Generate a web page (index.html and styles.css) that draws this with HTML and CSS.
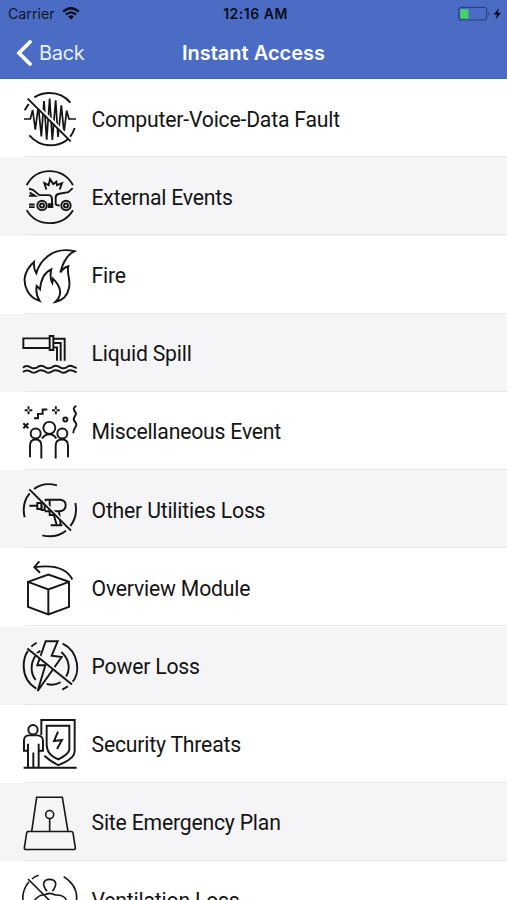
FILE: index.html
```html
<!DOCTYPE html>
<html lang="en">
<head>
<meta charset="utf-8">
<title>Instant Access</title>
<link rel="stylesheet" href="styles.css">
</head>
<body>
<header class="header">
  <div class="status">
    <div class="carrier"><span>Carrier</span>
      <svg class="wifi" viewBox="0 0 18 13"><path d="M1.2 4.7Q9-2.3 16.8 4.7M4 7.6Q9 3.2 14 7.6"/><path class="solid" d="M6.1 9.5Q9 7.2 11.9 9.5L9 12.5Z"/></svg>
    </div>
    <time class="clock">12:16 AM</time>
    <div class="power">
      <svg class="battery" viewBox="0 0 44 16"><rect class="case" x=".7" y="1.4" width="28" height="12.6" rx="2.5"/><rect class="charge" x="2.3" y="3.2" width="8.2" height="9.2" rx=".8"/><path class="cap" d="M30.3 5.7q2.5 2 0 4z"/><path class="bolt" d="M41 2L35.7 8.5H39L37.6 13.6L43 6.8H39.7Z"/></svg>
    </div>
  </div>
  <nav class="nav">
    <a class="back"><svg class="chevron" viewBox="0 0 16 26"><path d="M14 2L3 13L14 24"/></svg><span>Back</span></a>
    <h1 class="title">Instant Access</h1>
  </nav>
</header>
<main class="list">
  <div class="row">
    <svg class="icon" viewBox="0 0 240 216"><path d="M44 79L56 60M73 40Q94 27 119 27Q157 27 181 56M194 132Q177 184 119 184Q84 183 58 154"/><path class="wave" d="M42 105H61L68 78L76 137L85 66L94 157L102 51L110 167L119 44L127 168L137 49L144 159L154 64L162 146L170 80L177 105H198"/><path class="halo" d="M56 41L185 169"/><path d="M53 44L182 172"/></svg>
    <span class="label">Computer-Voice-Data Fault</span>
  </div>
  <div class="row">
    <svg class="icon" viewBox="0 .6 240 216"><path d="M50 70Q73 28 119 28Q165 28 189 70M50 145Q73 184 119 184Q165 184 189 145"/><path d="M57 81L69 84L88 100H118Q126 102 126 113V132H115M59 92L75 102H57M57 128H74M57 136H74M188 79L175 91L148 96Q137 98 137 107V126Q137 131 149 131M116 127H127V136H116Z"/><path d="M109 83L103 64L116 70L120 52L130 67L139 60L141 70L156 64L149 83"/><circle cx="96" cy="131" r="14"/><circle cx="96" cy="131" r="6"/><circle cx="168" cy="131" r="14"/><circle cx="168" cy="131" r="6"/></svg>
    <span class="label">External Events</span>
  </div>
  <div class="row">
    <svg class="icon" viewBox="0 1.2 240 216"><path d="M89 184C55 173 42 142 44 116Q47 89 72 67Q70 87 79 101C87 70 124 18 193 35Q164 48 151 99Q159 85 175 80C169 105 183 116 177 145Q170 180 136 187C157 167 155 143 129 117L127 130Q118 113 124 89Q94 102 90 149L80 139Q76 164 89 184Z"/></svg>
    <span class="label">Fire</span>
  </div>
  <div class="row">
    <svg class="icon" viewBox="0 1.8 240 216"><path d="M119 60H40V89H119M119 53H130V95H119ZM131 61H164V127M131 74H152V127M131 87H141V127"/><path d="M39 148Q47 140 56 144L66 149Q76 152 86 144Q92 140 101 144L110 149Q120 152 130 144Q136 140 145 144L155 149Q165 152 174 144Q181 140 188 144L200 149M39 161Q47 154 56 157L66 162Q76 165 86 157Q92 154 101 157L110 162Q120 165 130 157Q136 154 145 157L155 162Q165 165 174 157Q181 154 188 157L200 162"/></svg>
    <span class="label">Liquid Spill</span>
  </div>
  <div class="row">
    <svg class="icon" viewBox="0 2.4 240 216"><path d="M44 42H53M58 42H67M55.500 30V39M55.500 45V54M126 42H135M140 42H149M137.500 30V39M137.500 45V54M72 66H84V53H98V40H112M40 81L55 96M55 81L40 96M199 29C182 38 198 46 198 53C197 61 185 65 194 76C208 90 189 91 190 111"/><circle cx="166" cy="70" r="6"/><circle cx="118" cy="95" r="18"/><circle cx="77" cy="112" r="15"/><circle cx="157" cy="112" r="15"/><path d="M60 183V148Q60 130 77 130Q94 130 94 148V187M96 127Q104 114 118 114Q132 114 139 127M137 187V148Q137 130 156 130Q174 130 174 148V183"/></svg>
    <span class="label">Miscellaneous Event</span>
  </div>
  <div class="row">
    <svg class="icon" viewBox="0 3 240 216"><path d="M44 130Q34 88 59 58M72 45Q101 23 141 34M196 87Q204 127 181 156M168 170Q137 194 97 184"/><path d="M58 95H81M82 87H94V105H82ZM95 83H104V108H95ZM104 77H151Q167 79 167 93Q167 111 147 112H104M119 78V112M119 112V123H134M130 117L140 153M147 113L152 153M122 154H157"/><path class="halo shade" d="M60 44L185 168"/><path d="M58 46L183 170"/></svg>
    <span class="label">Other Utilities Loss</span>
  </div>
  <div class="row">
    <svg class="icon" viewBox="0 3.6 240 216"><path d="M54 90L115 68L177 90V165L115 188L54 165ZM54 90L115 113L177 90M115 113V188M187 83Q163 34 75 46M88 29L73 46L90 63"/></svg>
    <span class="label">Overview Module</span>
  </div>
  <div class="row">
    <svg class="icon" viewBox="0 4.2 240 216"><path d="M79 177Q42 155 41 110Q41 82 54 64M64 51Q71 44 80 40M158 42C208 66 213 135 184 160M174 170L157 180M77 151C61 132 61 101 76 79M80 71L91 64M154 67C181 91 182 124 164 147M152 158Q130 170 110 163"/><path d="M107 35H143L125 78L155 82L83 184L106 107H82Z"/><path class="halo shade" d="M54 54L188 162"/><path d="M52 57L186 165"/></svg>
    <span class="label">Power Loss</span>
  </div>
  <div class="row">
    <svg class="icon" viewBox="0 4.8 240 216"><path d="M41 181H200"/><circle cx="69" cy="67" r="14"/><path d="M54 179V109M54 130H42V98Q43 84 57 84H83Q98 85 99 100V130H85M86 109V179M70 135V179M94 83V38H194V131Q194 155 145 173Q123 163 103 145M110 117V55H178V127Q176 140 145 156Q116 145 111 122V115M144 73L132 101L156 98L141 125"/></svg>
    <span class="label">Security Threats</span>
  </div>
  <div class="row">
    <svg class="icon" viewBox="0 5.4 240 216"><path class="thin" d="M65 136L80 33H157L174 136M50 136H184Q188 136 189 140L196 185Q197 190 190 190H49Q42 190 43 185L50 140Q51 136 56 136M119 97V136"/><circle class="thin" cx="119" cy="85" r="12"/></svg>
    <span class="label">Site Emergency Plan</span>
  </div>
  <div class="row">
    <svg class="icon" viewBox="0 6 240 216"><path class="thin" d="M40 119Q33 81 57 53M66 45Q75 37 86 34M161 38Q209 68 198 119M111 82C92 58 103 46 119 46C135 46 146 58 127 82M74 109Q87 91 103 93M103 93Q119 83 135 93M135 93Q163 92 169 109M54 45L130 121"/></svg>
    <span class="label">Ventilation Loss</span>
  </div>
</main>
</body>
</html>
```

FILE: styles.css
```css
* { box-sizing: border-box; }
body {
  margin: 0;
  height: 900px;
  overflow: hidden;
  background: #fff;
  font-family: Roboto, sans-serif;
}
.header {
  height: 79.3px;
  background: #4a6cc5;
  border-bottom: 1px solid #4565b7;
  font-family: Inter, sans-serif;
}
.status {
  display: grid;
  grid-template-columns: 1fr auto 1fr;
  align-items: center;
  height: 27px;
  padding: 0 5px 0 8px;
  color: #10172b;
  font-size: 14.2px;
}
.carrier { display: flex; align-items: center; gap: 7px; }
.clock { font-weight: 600; color: #080c18; font-size: 14px; letter-spacing: .5px; margin-left: 1px; }
.power { display: flex; justify-content: flex-end; }
.wifi { width: 18px; height: 13px; fill: none; stroke: #080c18; stroke-width: 2.3; }
.wifi .solid { fill: #080c18; stroke: none; }
.battery { width: 44px; height: 16px; }
.case { fill: none; stroke: #2c427c; stroke-width: 1.2; }
.charge { fill: #45d45f; }
.cap { fill: #2c427c; }
.bolt { fill: #080c18; }
.nav {
  display: grid;
  grid-template-columns: 1fr auto 1fr;
  align-items: center;
  height: 52px;
  padding: 0 16px;
  color: #fff;
}
.back { display: flex; align-items: center; gap: 7px; font-size: 20px; letter-spacing: -.3px; color: #e9efff; }
.chevron { width: 16px; height: 26px; fill: none; stroke: #fff; stroke-width: 3.8; stroke-linecap: round; }
.title { margin: 0; font-size: 20px; font-weight: 600; }
.row {
  display: flex;
  height: 78.2px;
  padding: 4.7px 0 0 10px;
  background: linear-gradient(#e7e7e9, #e7e7e9) 25px 100% / 100% 1.3px no-repeat #fff;
}
.row:nth-child(even) { background-color: #f5f5f7; }
.icon {
  flex: none;
  width: 80px;
  height: 72px;
  fill: none;
  stroke: #151515;
  stroke-width: 5.8;
}
.icon .thin { stroke-width: 4.8; }
.icon .wave { stroke-width: 5.2; }
.icon .halo { stroke: #fff; stroke-width: 9; }
.icon .shade { stroke: #f5f5f7; }
.label {
  padding: 22.6px 0 0 1.5px;
  color: #141414;
  font-size: 21.2px;
  letter-spacing: -.2px;
  line-height: 26px;
  white-space: nowrap;
}
```
